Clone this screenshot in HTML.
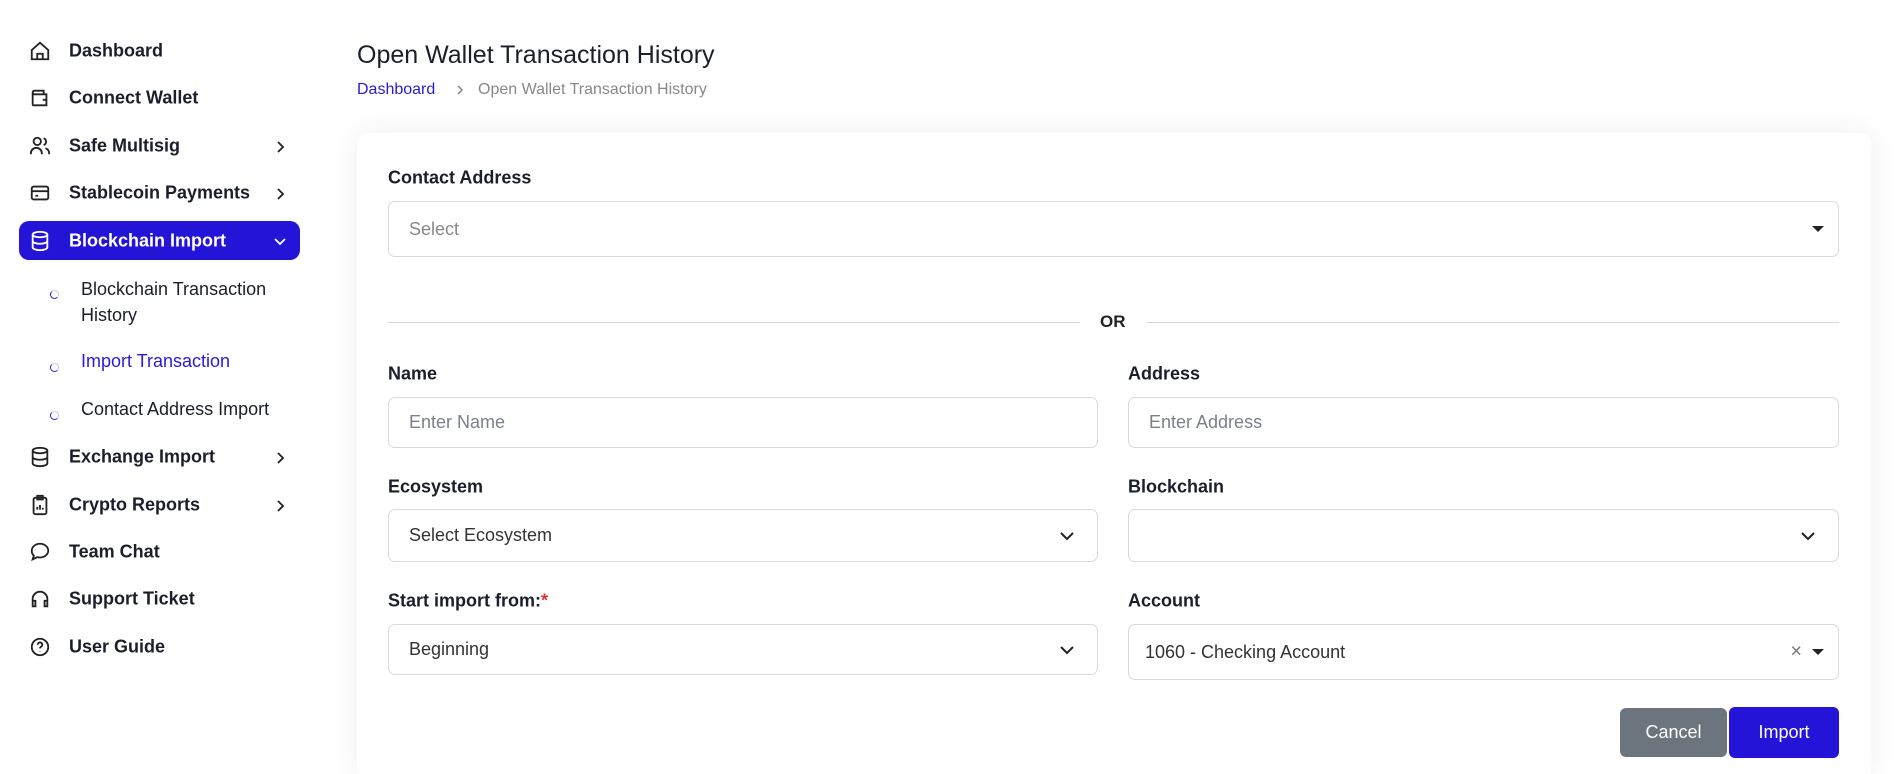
<!DOCTYPE html>
<html><head><meta charset="utf-8"><style>
*{box-sizing:border-box;margin:0;padding:0}
html,body{width:1902px;height:774px;overflow:hidden}
body{background:#fff;font-family:"Liberation Sans",sans-serif;position:relative;color:#1f2330}
.abs{position:absolute}
.it{position:absolute;left:69px;font-size:18px;font-weight:600;color:#1b1e2b;transform:translateY(-50%)}
.ic{position:absolute;left:29px;width:22px;height:22px;transform:translateY(-50%)}
.chev{position:absolute;left:273px;transform:translateY(-50%)}
.sub{position:absolute;left:81px;font-size:18px;color:#1b1e2b;line-height:26px}
.dot{position:absolute;left:50px;width:9px;height:9px;border-radius:50%;border:1.5px solid #c8c8d8;border-left-color:#2a1ad8;border-bottom-color:#2a1ad8}
.lbl{position:absolute;font-size:18px;font-weight:600;color:#1b1e2b;transform:translateY(-50%)}
.box{position:absolute;border:1px solid #d6d9de;border-radius:7px;background:#fff;font-size:18px;display:flex;align-items:center;padding-left:20px;color:#333}
.ph{color:#7b8089}
.dd{position:absolute;right:22px;top:50%;transform:translateY(-50%)}
.tri{position:absolute;right:14px;top:50%;margin-top:-3px;border-left:6px solid transparent;border-right:6px solid transparent;border-top:6px solid #222}
</style></head><body>
<svg class="ic" style="top:51px" viewBox="0 0 24 24" fill="none" stroke="#222" stroke-width="2"><path d="M3 11 12 3l9 8v10H3z M9 21v-6h6v6"/></svg>
<div class="it" style="top:51px">Dashboard</div>
<svg class="ic" style="top:98px" viewBox="0 0 24 24" fill="none" stroke="#222" stroke-width="2"><path d="M4 6a2 2 0 0 1 2-2h10v4M4 6v13a1 1 0 0 0 1 1h14V8H6a2 2 0 0 1-2-2M15 14h5"/></svg>
<div class="it" style="top:98px">Connect Wallet</div>
<svg class="ic" style="top:146px" viewBox="0 0 24 24" fill="none" stroke="#222" stroke-width="2"><circle cx="9" cy="7" r="4"/><path d="M2 21v-1a6 6 0 0 1 12 0v1M16 3.5a4 4 0 0 1 0 7.5M22 21v-1a6 6 0 0 0-4-5.6"/></svg>
<div class="it" style="top:146px">Safe Multisig</div>
<svg class="chev" style="top:147px" width="14" height="14" viewBox="0 0 14 14" fill="none" stroke="#222" stroke-width="1.8"><path d="M5 2l5 5-5 5"/></svg>
<svg class="ic" style="top:193px" viewBox="0 0 24 24" fill="none" stroke="#222" stroke-width="2"><rect x="3" y="5" width="18" height="14" rx="2"/><path d="M3 10h18M7 15h3"/></svg>
<div class="it" style="top:193px">Stablecoin Payments</div>
<svg class="chev" style="top:194px" width="14" height="14" viewBox="0 0 14 14" fill="none" stroke="#222" stroke-width="1.8"><path d="M5 2l5 5-5 5"/></svg>
<div class="abs" style="left:19px;top:221px;width:281px;height:39px;background:#2314d8;border-radius:10px"></div>
<svg class="ic" style="top:241px" viewBox="0 0 24 24" fill="none" stroke="#fff" stroke-width="2"><ellipse cx="12" cy="5" rx="8" ry="3"/><path d="M4 5v14c0 1.7 3.6 3 8 3s8-1.3 8-3V5M4 12c0 1.7 3.6 3 8 3s8-1.3 8-3"/></svg>
<div class="it" style="top:241px;color:#fff;font-weight:700">Blockchain Import</div>
<svg class="chev" style="top:241px" width="14" height="14" viewBox="0 0 14 14" fill="none" stroke="#fff" stroke-width="1.8"><path d="M2 5l5 5 5-5"/></svg>
<div class="dot" style="top:290px"></div>
<div class="sub" style="top:276px">Blockchain Transaction<br>History</div>
<div class="dot" style="top:363px"></div>
<div class="sub" style="top:348px;color:#2a1ad8">Import Transaction</div>
<div class="dot" style="top:411px"></div>
<div class="sub" style="top:396px">Contact Address Import</div>
<svg class="ic" style="top:457px" viewBox="0 0 24 24" fill="none" stroke="#222" stroke-width="2"><ellipse cx="12" cy="5" rx="8" ry="3"/><path d="M4 5v14c0 1.7 3.6 3 8 3s8-1.3 8-3V5M4 12c0 1.7 3.6 3 8 3s8-1.3 8-3"/></svg>
<div class="it" style="top:457px">Exchange Import</div>
<svg class="chev" style="top:458px" width="14" height="14" viewBox="0 0 14 14" fill="none" stroke="#222" stroke-width="1.8"><path d="M5 2l5 5-5 5"/></svg>
<svg class="ic" style="top:505px" viewBox="0 0 24 24" fill="none" stroke="#222" stroke-width="2"><rect x="5" y="4" width="14" height="18" rx="2"/><path d="M9 2h6v4H9zM9 17v-3M12 17v-5M15 17v-2"/></svg>
<div class="it" style="top:505px">Crypto Reports</div>
<svg class="chev" style="top:506px" width="14" height="14" viewBox="0 0 14 14" fill="none" stroke="#222" stroke-width="1.8"><path d="M5 2l5 5-5 5"/></svg>
<svg class="ic" style="top:552px" viewBox="0 0 24 24" fill="none" stroke="#222" stroke-width="2"><path d="M12 3c5 0 9 3.4 9 7.5S17 18 12 18c-1 0-2-.1-3-.4L4 20l1.3-4A7.2 7.2 0 0 1 3 10.5C3 6.4 7 3 12 3z"/></svg>
<div class="it" style="top:552px">Team Chat</div>
<svg class="ic" style="top:599px" viewBox="0 0 24 24" fill="none" stroke="#222" stroke-width="2"><path d="M4 16v-4a8 8 0 0 1 16 0v4M4 14h3v6H4zM17 14h3v6h-3z"/></svg>
<div class="it" style="top:599px">Support Ticket</div>
<svg class="ic" style="top:647px" viewBox="0 0 24 24" fill="none" stroke="#222" stroke-width="2"><circle cx="12" cy="12" r="9"/><path d="M9.5 9.5a2.5 2.5 0 1 1 3.5 2.3c-.7.4-1 .9-1 1.7M12 17v.5"/></svg>
<div class="it" style="top:647px">User Guide</div>

<div class="abs" style="left:357px;top:41px;font-size:25px;color:#1b1e2b">Open Wallet Transaction History</div>
<div class="abs" style="left:357px;top:81px;font-size:16px;color:#2a1ad8">Dashboard</div>
<svg class="abs" style="left:454px;top:84px" width="12" height="12" viewBox="0 0 12 12" fill="none" stroke="#888" stroke-width="1.5"><path d="M4 2l4 4-4 4"/></svg>
<div class="abs" style="left:478px;top:81px;font-size:16px;color:#888">Open Wallet Transaction History</div>

<div class="abs" style="left:357px;top:133px;width:1514px;height:641px;background:#fff;border-radius:10px 10px 0 0;box-shadow:0 0 30px rgba(30,30,80,0.07)"></div>

<div class="lbl" style="left:388px;top:178px">Contact Address</div>
<div class="box" style="left:388px;top:201px;width:1451px;height:56px"><span class="ph" style="color:#888">Select</span><div class="tri"></div></div>

<div class="abs" style="left:388px;top:322px;width:692px;height:1px;background:#d6d6d6"></div>
<div class="abs" style="left:1146px;top:322px;width:693px;height:1px;background:#d6d6d6"></div>
<div class="abs" style="left:1100px;top:312px;font-size:17px;font-weight:700;color:#222">OR</div>

<div class="lbl" style="left:388px;top:374px">Name</div>
<div class="lbl" style="left:1128px;top:374px">Address</div>
<div class="box" style="left:388px;top:397px;width:710px;height:51px"><span class="ph">Enter Name</span></div>
<div class="box" style="left:1128px;top:397px;width:711px;height:51px"><span class="ph">Enter Address</span></div>

<div class="lbl" style="left:388px;top:487px">Ecosystem</div>
<div class="lbl" style="left:1128px;top:487px">Blockchain</div>
<div class="box" style="left:388px;top:509px;width:710px;height:53px">Select Ecosystem<svg class="dd" width="16" height="16" viewBox="0 0 16 16" fill="none" stroke="#222" stroke-width="2"><path d="M2 5l6 6 6-6"/></svg></div>
<div class="box" style="left:1128px;top:509px;width:711px;height:53px"><svg class="dd" width="16" height="16" viewBox="0 0 16 16" fill="none" stroke="#222" stroke-width="2"><path d="M2 5l6 6 6-6"/></svg></div>

<div class="lbl" style="left:388px;top:601px">Start import from:<span style="color:#e03030">*</span></div>
<div class="lbl" style="left:1128px;top:601px">Account</div>
<div class="box" style="left:388px;top:624px;width:710px;height:51px">Beginning<svg class="dd" width="16" height="16" viewBox="0 0 16 16" fill="none" stroke="#222" stroke-width="2"><path d="M2 5l6 6 6-6"/></svg></div>
<div class="box" style="left:1128px;top:624px;width:711px;height:56px;padding-left:16px">1060 - Checking Account<span style="position:absolute;right:36px;top:50%;transform:translateY(-50%);color:#777;font-size:20px">×</span><div class="tri"></div></div>

<div class="abs" style="left:1620px;top:708px;width:107px;height:49px;background:#6c757d;border-radius:6px;color:#fff;font-size:18px;display:flex;align-items:center;justify-content:center">Cancel</div>
<div class="abs" style="left:1729px;top:707px;width:110px;height:51px;background:#2314d8;border-radius:6px;color:#fff;font-size:18px;display:flex;align-items:center;justify-content:center">Import</div>
</body></html>
